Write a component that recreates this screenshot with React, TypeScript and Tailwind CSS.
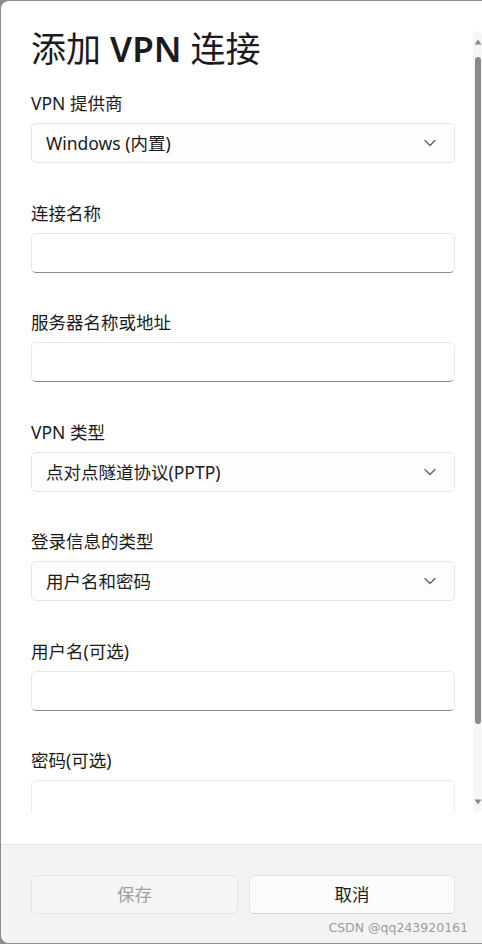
import React from "react";

const FONT = '"Segoe UI", "Noto Sans", "Noto Sans CJK SC", sans-serif';

function Chevron() {
  return (
    <svg width="12" height="8" viewBox="0 0 12 8" className="shrink-0">
      <path d="M1 1.5 L6 6.5 L11 1.5" fill="none" stroke="#5c5c5c" strokeWidth="1.2" strokeLinecap="round" strokeLinejoin="round" />
    </svg>
  );
}

function Label({ children, first }: { children: React.ReactNode; first?: boolean }) {
  return (
    <div className={`${first ? "mt-[20px]" : "mt-[37.5px]"} h-[24px] leading-[24px] text-[17.5px] text-[#1b1b1b]`}>
      {children}
    </div>
  );
}

function Select({ value }: { value: string }) {
  return (
    <div className="mt-[8px] h-[40px] rounded-[5px] border border-[#e5e5e5] bg-[#fdfdfd] flex items-center justify-between pl-[14px] pr-[18px] shrink-0">
      <span className="text-[17.5px] leading-[24px] text-[#1b1b1b]">{value}</span>
      <Chevron />
    </div>
  );
}

function Input() {
  return (
    <div className="mt-[8px] h-[40px] rounded-[5px] border border-[#e8e8e8] border-b-[#8a8a8a] bg-white shrink-0" />
  );
}

export default function App() {
  return (
    <div className="w-[482px] h-[944px] bg-[#8c8c8c] overflow-hidden" style={{ fontFamily: FONT }}>
      <div className="ml-[1px] mt-[1px] h-[942px] rounded-l-[8px] bg-white overflow-hidden flex flex-col">
        <div className="flex h-[812px] shrink-0">
          <div className="w-[454px] pl-[30px] pr-0 overflow-hidden flex flex-col">
            <div className="w-[424px] flex flex-col">
              <div className="mt-[26px] h-[44px] leading-[44px] text-[35px] text-[#1b1b1b] whitespace-pre">
                <span className="font-normal">添加 </span>
                <span className="font-semibold">VPN</span>
                <span className="font-normal"> 连接</span>
              </div>
              <Label first>VPN 提供商</Label>
              <Select value="Windows (内置)" />
              <Label>连接名称</Label>
              <Input />
              <Label>服务器名称或地址</Label>
              <Input />
              <Label>VPN 类型</Label>
              <Select value="点对点隧道协议(PPTP)" />
              <Label>登录信息的类型</Label>
              <Select value="用户名和密码" />
              <Label>用户名(可选)</Label>
              <Input />
              <Label>密码(可选)</Label>
              <div className="mt-[8px] h-[40px] rounded-[5px] border border-[#ececec] bg-white shrink-0" />
            </div>
          </div>
          <div className="ml-[18px] mt-[30px] w-[9px] h-[782px] rounded-[5px] bg-[#f6f6f6] flex flex-col items-center">
            <svg width="8" height="6" viewBox="0 0 8 6" className="mt-[8px]">
              <path d="M4 0.5 L7.5 5.5 L0.5 5.5 Z" fill="#8a8a8a" />
            </svg>
            <div className="mt-[12px] w-[6px] h-[667px] rounded-[3px] bg-[#8a8a8a]" />
            <div className="flex-1" />
            <svg width="8" height="6" viewBox="0 0 8 6" className="mb-[8px]">
              <path d="M0.5 0.5 L7.5 0.5 L4 5.5 Z" fill="#8a8a8a" />
            </svg>
          </div>
        </div>
        <div className="h-[31px] shrink-0" />
        <div className="flex-1 bg-[#f3f3f3] border-t border-[#e5e5e5] flex flex-col">
          <div className="mt-[30px] pl-[30px] flex gap-[11px]">
            <div className="w-[207px] h-[39px] rounded-[5px] border border-[#e3e3e3] bg-[#f5f5f5] flex items-center justify-center text-[17.5px] text-[#a0a0a0]">
              保存
            </div>
            <div className="w-[206px] h-[39px] rounded-[5px] border border-[#e3e3e3] border-b-[#d0d0d0] bg-[#fcfcfc] flex items-center justify-center text-[17.5px] text-[#1b1b1b]">
              取消
            </div>
          </div>
          <div className="mt-[5px] pr-[14px] text-right text-[12.5px] leading-[18px] text-[#9c9c9c]" style={{ fontFamily: '"DejaVu Sans", sans-serif' }}>
            CSDN @qq243920161
          </div>
        </div>
      </div>
    </div>
  );
}
